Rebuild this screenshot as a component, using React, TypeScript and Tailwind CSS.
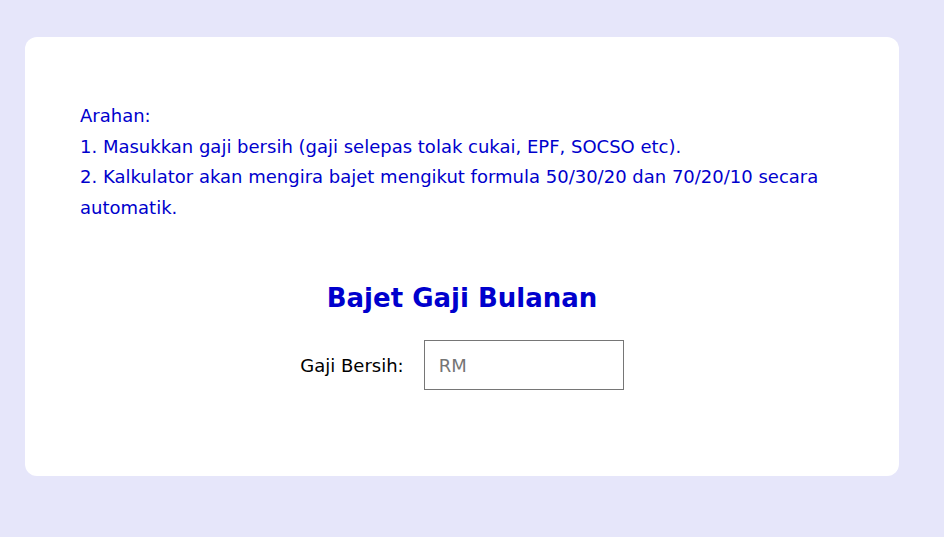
import React from 'react';

const font = { fontFamily: '"Trebuchet MS", "DejaVu Sans", sans-serif' };

const App: React.FC = () => {
  return (
    <div className="min-h-screen w-full bg-[#e6e6fa] pt-[37px] pl-[25px]" style={font}>
      <div className="w-[874px] h-[439px] bg-white rounded-[12px] px-[55px] pt-[64px]">
        <div className="text-[18px] leading-[30.6px] text-[#0000cd]">
          <p>Arahan:</p>
          <p>1. Masukkan gaji bersih (gaji selepas tolak cukai, EPF, SOCSO etc).</p>
          <p>2. Kalkulator akan mengira bajet mengikut formula 50/30/20 dan 70/20/10 secara automatik.</p>
        </div>

        <h1 className="mt-[58px] text-center text-[26px] leading-[34px] font-bold text-[#0000cd]">
          Bajet Gaji Bulanan
        </h1>

        <div className="mt-[25px] flex items-center justify-center gap-[20px]">
          <label className="text-[18px] text-black">Gaji Bersih:</label>
          <input
            type="text"
            placeholder="RM"
            className="w-[200px] h-[50px] border border-[#767676] px-[14px] text-[18px] placeholder:text-[#757575] outline-none"
            style={font}
          />
        </div>
      </div>
    </div>
  );
};

export default App;
